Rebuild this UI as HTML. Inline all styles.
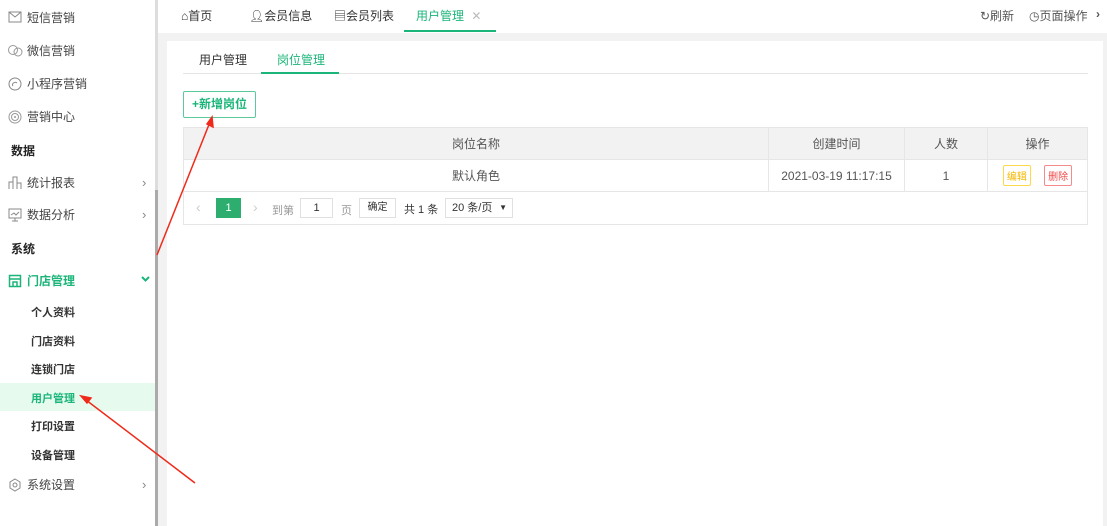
<!DOCTYPE html>
<html><head><meta charset="utf-8"><style>
*{margin:0;padding:0;box-sizing:border-box}
body{width:1107px;height:526px;overflow:hidden;background:#fff;font-family:"Liberation Sans","Noto Sans CJK SC",sans-serif;font-size:12px;color:#333;position:relative}
.side{position:absolute;left:0;top:0;width:155px;height:526px;background:#fff}
.it{position:absolute;left:8px;height:20px;line-height:20px;font-size:12px;color:#444}
.it svg{position:absolute;left:0;top:3px}
.it span{position:absolute;left:19px;white-space:nowrap}
.hd{position:absolute;left:11px;font-weight:bold;font-size:12px;color:#222}
.sub{position:absolute;left:31px;font-size:11px;font-weight:bold;color:#333}
.chev{position:absolute;left:142px;color:#888;font-size:13px}
.track{position:absolute;left:155px;top:0;width:3px;height:526px;background:#ddd}
.thumb{position:absolute;left:155px;top:190px;width:3px;height:336px;background:#aaa}
.main{position:absolute;left:158px;top:0;width:949px;height:526px;background:#f2f2f2}
.top{position:absolute;left:158px;top:0;width:949px;height:33px;background:#fff}
.tab{position:absolute;top:7px;font-size:12px;color:#333}
.panel{position:absolute;left:167px;top:41px;width:936px;height:485px;background:#fff}
table{position:absolute;left:183px;top:127px;width:905px;border-collapse:collapse;font-size:12px;color:#555}
td{border:1px solid #e6e6e6;text-align:center;height:32px}
tr.h td{background:#f2f2f2}
</style></head><body>
<div class="side">
<div class="it" style="top:8px"><svg width="14" height="12"><rect x="1" y="1" width="12" height="10" fill="none" stroke="#888"/><path d="M1 1l6 5 6-5" fill="none" stroke="#888"/></svg><span>短信营销</span></div>
<div class="it" style="top:41px"><svg width="15" height="13"><circle cx="5" cy="6" r="4.5" fill="none" stroke="#999"/><circle cx="10" cy="8" r="4" fill="none" stroke="#999"/></svg><span>微信营销</span></div>
<div class="it" style="top:74px"><svg width="14" height="14"><circle cx="7" cy="7" r="6" fill="none" stroke="#888"/><path d="M5 9c-2-2 2-5 4-3" fill="none" stroke="#888"/></svg><span>小程序营销</span></div>
<div class="it" style="top:107px"><svg width="14" height="14"><circle cx="7" cy="7" r="6" fill="none" stroke="#999"/><circle cx="7" cy="7" r="3.5" fill="none" stroke="#999"/><circle cx="7" cy="7" r="1" fill="#999"/></svg><span>营销中心</span></div>
<div class="hd" style="top:142px">数据</div>
<div class="it" style="top:173px"><svg width="14" height="14"><path d="M1 13V6h4v7M5 13V1h4v12M9 13V7h4v6" fill="none" stroke="#888"/></svg><span>统计报表</span></div><div class="chev" style="top:175px">›</div>
<div class="it" style="top:205px"><svg width="14" height="14"><rect x="1" y="1" width="12" height="9" fill="none" stroke="#888"/><path d="M7 10v3M4 13h6M3 7l3-2 2 2 3-3" fill="none" stroke="#888"/></svg><span>数据分析</span></div><div class="chev" style="top:207px">›</div>
<div class="hd" style="top:240px">系统</div>
<div class="it" style="top:271px;color:#1bb57a"><svg width="14" height="14"><rect x="1.5" y="1.5" width="11" height="11" fill="none" stroke="#1bb57a" stroke-width="1.5"/><path d="M1.5 5h11M5 13V8h4v5" fill="none" stroke="#1bb57a" stroke-width="1.5"/></svg><span style="font-weight:bold">门店管理</span></div>
<svg style="position:absolute;left:141px;top:276px" width="9" height="6"><path d="M1 1l3.5 3.5L8 1" fill="none" stroke="#1bb57a" stroke-width="2"/></svg>
<div class="sub" style="top:304px">个人资料</div>
<div class="sub" style="top:333px">门店资料</div>
<div class="sub" style="top:361px">连锁门店</div>
<div style="position:absolute;left:0;top:383px;width:155px;height:28px;background:#e6fbee"></div>
<div class="sub" style="top:390px;color:#1bb57a">用户管理</div>
<div class="sub" style="top:418px">打印设置</div>
<div class="sub" style="top:447px">设备管理</div>
<div class="it" style="top:475px"><svg width="14" height="14"><path d="M7 1l5 3v6l-5 3-5-3V4z" fill="none" stroke="#888"/><circle cx="7" cy="7" r="2" fill="none" stroke="#888"/></svg><span>系统设置</span></div><div class="chev" style="top:477px">›</div>
</div>
<div class="track"></div><div class="thumb"></div>
<div class="main"></div>
<div class="top"></div>
<div class="tab" style="left:181px">⌂首页</div>
<div class="tab" style="left:249px">👤︎会员信息</div>
<div class="tab" style="left:334px">▤会员列表</div>
<div class="tab" style="left:416px;color:#1bb57a">用户管理 <span style="color:#bbb;margin-left:4px">✕</span></div>
<div style="position:absolute;left:404px;top:30px;width:92px;height:2px;background:#1bb57a"></div>
<div class="tab" style="left:980px;color:#555">↻刷新</div>
<div class="tab" style="left:1029px;color:#555">◷页面操作</div>
<div class="tab" style="left:1096px;color:#555;font-weight:bold">›</div>
<div class="panel"></div>
<div style="position:absolute;left:199px;top:51px;font-size:12px;color:#333">用户管理</div>
<div style="position:absolute;left:277px;top:51px;font-size:12px;color:#1bb57a">岗位管理</div>
<div style="position:absolute;left:183px;top:73px;width:905px;height:1px;background:#e6e6e6"></div>
<div style="position:absolute;left:261px;top:72px;width:78px;height:2px;background:#1bb57a"></div>
<div style="position:absolute;left:183px;top:91px;width:73px;height:27px;border:1px solid #5cc99a;border-radius:2px;color:#1bb57a;line-height:25px;text-align:center;font-size:12px;font-weight:bold"><b>+</b>新增岗位</div>
<table>
<tr class="h"><td style="width:585px">岗位名称</td><td style="width:136px">创建时间</td><td style="width:83px">人数</td><td>操作</td></tr>
<tr><td>默认角色</td><td>2021-03-19 11:17:15</td><td>1</td><td><span style="display:inline-block;border:1px solid #fbd94a;color:#f5b800;font-size:10px;padding:2px 3px;border-radius:2px">编辑</span>&nbsp;&nbsp;&nbsp;&nbsp;<span style="display:inline-block;border:1px solid #f58a8a;color:#f04848;font-size:10px;padding:2px 3px;border-radius:2px">删除</span></td></tr>
<tr><td colspan="4" style="height:33px"></td></tr>
</table>
<div style="position:absolute;left:196px;top:199px;color:#ccc;font-size:14px">‹</div>
<div style="position:absolute;left:216px;top:198px;width:25px;height:20px;background:#2eae6e;color:#fff;text-align:center;line-height:20px;font-size:11px">1</div>
<div style="position:absolute;left:253px;top:199px;color:#ccc;font-size:14px">›</div>
<div style="position:absolute;left:272px;top:202px;color:#999;font-size:11px">到第</div>
<div style="position:absolute;left:300px;top:198px;width:33px;height:20px;border:1px solid #e0e0e0;text-align:center;line-height:18px;font-size:11px">1</div>
<div style="position:absolute;left:341px;top:202px;color:#999;font-size:11px">页</div>
<div style="position:absolute;left:359px;top:198px;width:37px;height:20px;border:1px solid #e0e0e0;text-align:center;line-height:18px;font-size:10px">确定</div>
<div style="position:absolute;left:404px;top:201px;font-size:11px">共 1 条</div>
<div style="position:absolute;left:445px;top:198px;width:68px;height:20px;border:1px solid #e0e0e0;line-height:18px;font-size:11px;padding-left:6px">20 条/页 <span style="position:absolute;right:5px;font-size:8px">▼</span></div>
<svg style="position:absolute;left:0;top:0" width="1107" height="526"><g stroke="#f02a1a" stroke-width="1.5" fill="#f02a1a"><line x1="157" y1="255" x2="210" y2="122"/><path d="M212 117l1 10-6-3z"/><line x1="195" y1="483" x2="86" y2="400"/><path d="M81 396l10 2-4 5z"/></g></svg>
</body></html>
